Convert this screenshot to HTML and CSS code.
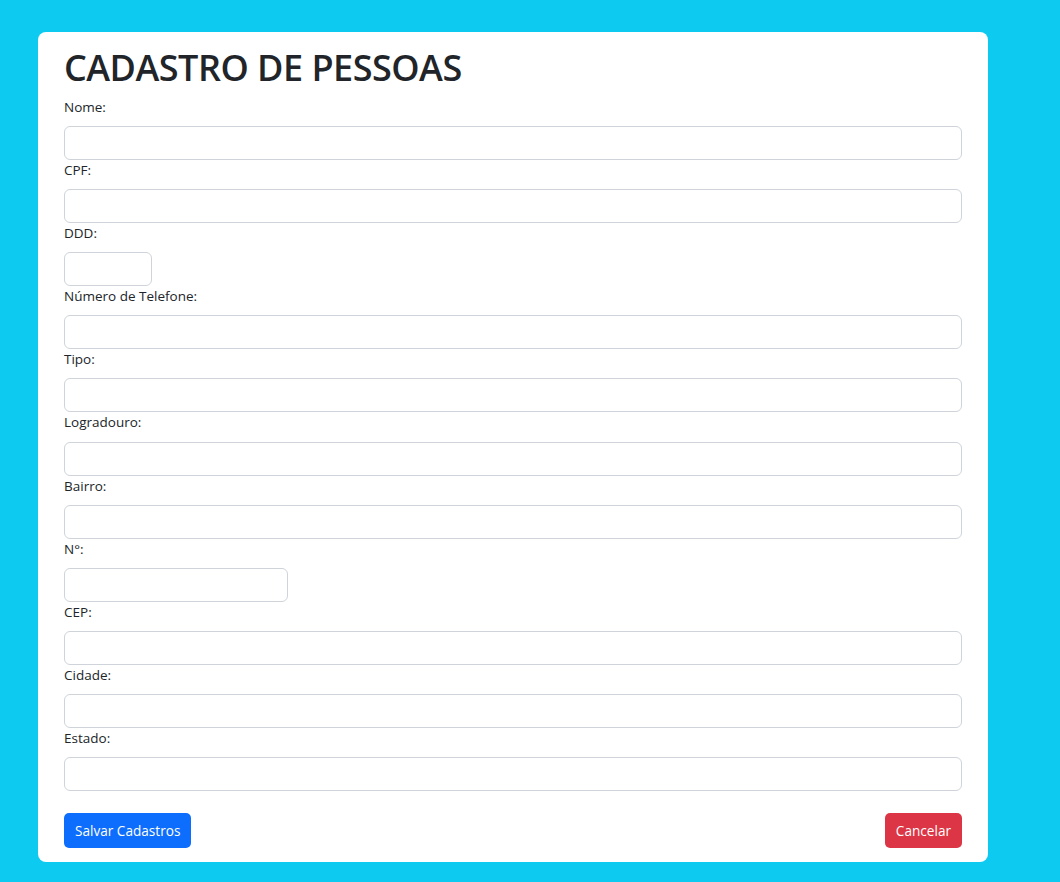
FILE: index.html
```html
<!DOCTYPE html>
<html lang="pt-BR">
<head>
<meta charset="utf-8">
<title>Cadastro de Pessoas</title>
<link rel="stylesheet" href="styles.css">
</head>
<body>
<div class="page">
  <form class="card">
    <h1 class="title">CADASTRO DE PESSOAS</h1>
    <div class="field"><label class="label">Nome:</label><input class="input" type="text"></div>
    <div class="field"><label class="label">CPF:</label><input class="input" type="text"></div>
    <div class="field"><label class="label">DDD:</label><input class="input input-ddd" type="text"></div>
    <div class="field"><label class="label">Número de Telefone:</label><input class="input" type="text"></div>
    <div class="field"><label class="label">Tipo:</label><input class="input" type="text"></div>
    <div class="field"><label class="label">Logradouro:</label><input class="input" type="text"></div>
    <div class="field"><label class="label">Bairro:</label><input class="input" type="text"></div>
    <div class="field"><label class="label">N°:</label><input class="input input-num" type="text"></div>
    <div class="field"><label class="label">CEP:</label><input class="input" type="text"></div>
    <div class="field"><label class="label">Cidade:</label><input class="input" type="text"></div>
    <div class="field"><label class="label">Estado:</label><input class="input" type="text"></div>
    <div class="actions">
      <button class="btn btn-primary" type="button">Salvar Cadastros</button>
      <button class="btn btn-danger" type="button">Cancelar</button>
    </div>
  </form>
</div>
</body>
</html>
```

FILE: styles.css
```css
* { box-sizing: border-box; }
html, body { margin: 0; padding: 0; }
body {
  background: #0dcaf0;
  font-family: "Open Sans", "Noto Sans", sans-serif;
  color: #212529;
  font-size: 14px;
  height: 882px;
}
.page {
  padding: 32px 72px 0 38px;
}
.card {
  width: 950px;
  height: 830px;
  background: #fff;
  border-radius: 8px;
  padding: 14px 26px 14px 26px;
  display: flex;
  flex-direction: column;
}
.title {
  margin: 0 0 7px 0;
  font-size: 36px;
  line-height: 44px;
  font-weight: 600;
  letter-spacing: -0.5px;
  height: 44px;
}
.field {
  display: flex;
  flex-direction: column;
  align-items: flex-start;
}
.label {
  font-size: 13.5px;
  line-height: 21.1px;
  margin-bottom: 8px;
}
.input {
  width: 100%;
  height: 34px;
  border: 1px solid #ced4da;
  border-radius: 6px;
  background: #fff;
  font: inherit;
  padding: 5px 11px;
}
.input-ddd { width: 88px; }
.input-num { width: 224px; }
.actions {
  margin-top: 22px;
  display: flex;
  justify-content: space-between;
}
.btn {
  height: 35px;
  border: none;
  border-radius: 5px;
  color: #fff;
  font-family: inherit;
  font-size: 13.6px;
  padding: 0 11px;
}
.btn-primary { background: #0d6efd; }
.btn-danger { background: #dc3545; }
```
